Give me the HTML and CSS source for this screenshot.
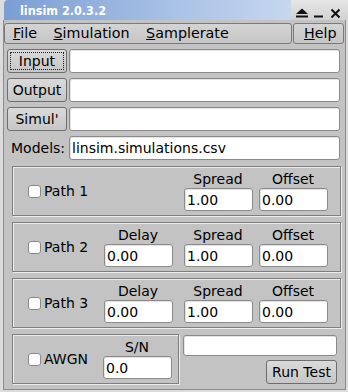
FILE: index.html
```html
<!DOCTYPE html>
<html>
<head>
<title>linsim 2.0.3.2</title>
<link rel="stylesheet" href="styles.css">
</head>
<body>

<div class="window">

    <div class="titlebar">
        <div class="title">linsim 2.0.3.2</div>
        <div class="wm-buttons">
            <svg width="57" height="20" viewBox="0 0 57 20">
                <polygon points="5,14 11,8.5 17,14" fill="#111"/>
                <rect x="5" y="15.5" width="12" height="2" fill="#111"/>
                <rect x="23" y="15.5" width="9" height="2" fill="#111"/>
                <path d="M40.5 9.5 L48.5 17.5 M48.5 9.5 L40.5 17.5" stroke="#111" stroke-width="2"/>
            </svg>
        </div>
    </div>

    <div class="client">

        <div class="menubar">
            <div class="menu-main">
                <span class="menu-item"><u>F</u>ile</span>
                <span class="menu-item"><u>S</u>imulation</span>
                <span class="menu-item"><u>S</u>amplerate</span>
            </div>
            <div class="menu-help">
                <span class="menu-item"><u>H</u>elp</span>
            </div>
        </div>

        <div class="file-row">
            <button class="btn file-btn focused">Input</button>
            <input class="entry file-entry" type="text" value="">
        </div>
        <div class="file-row">
            <button class="btn file-btn">Output</button>
            <input class="entry file-entry" type="text" value="">
        </div>
        <div class="file-row">
            <button class="btn file-btn">Simul'</button>
            <input class="entry file-entry" type="text" value="">
        </div>
        <div class="file-row">
            <label class="models-label">Models:</label>
            <input class="entry file-entry" type="text" value="linsim.simulations.csv">
        </div>

        <div class="group path">
            <div class="check-cell"><span class="checkbox"></span>Path 1</div>
            <div class="field"></div>
            <div class="field">
                <div class="field-label">Spread</div>
                <input class="entry num" type="text" value="1.00">
            </div>
            <div class="field">
                <div class="field-label">Offset</div>
                <input class="entry num" type="text" value="0.00">
            </div>
        </div>

        <div class="group path">
            <div class="check-cell"><span class="checkbox"></span>Path 2</div>
            <div class="field">
                <div class="field-label">Delay</div>
                <input class="entry num" type="text" value="0.00">
            </div>
            <div class="field">
                <div class="field-label">Spread</div>
                <input class="entry num" type="text" value="1.00">
            </div>
            <div class="field">
                <div class="field-label">Offset</div>
                <input class="entry num" type="text" value="0.00">
            </div>
        </div>

        <div class="group path">
            <div class="check-cell"><span class="checkbox"></span>Path 3</div>
            <div class="field">
                <div class="field-label">Delay</div>
                <input class="entry num" type="text" value="0.00">
            </div>
            <div class="field">
                <div class="field-label">Spread</div>
                <input class="entry num" type="text" value="1.00">
            </div>
            <div class="field">
                <div class="field-label">Offset</div>
                <input class="entry num" type="text" value="0.00">
            </div>
        </div>

        <div class="bottom-row">
            <div class="group awgn">
                <div class="check-cell"><span class="checkbox"></span>AWGN</div>
                <div class="field">
                    <div class="field-label">S/N</div>
                    <input class="entry num" type="text" value="0.0">
                </div>
            </div>
            <div class="run-box">
                <input class="entry status-entry" type="text" value="">
                <button class="btn run-btn">Run Test</button>
            </div>
        </div>

    </div>
</div>

</body>
</html>
```

FILE: styles.css
```css
* {
    box-sizing: border-box;
}

body {
    margin: 0;
    font-family: "DejaVu Sans", sans-serif;
    font-size: 14px;
    color: #000;
}

.window {
    width: 348px;
    height: 392px;
    background: #dcdcdc;
    display: flex;
    flex-direction: column;
    overflow: hidden;
}

/* window manager title */

.titlebar {
    height: 20px;
    display: flex;
    flex-shrink: 0;
}

.title {
    flex: 1;
    margin-left: 4px;
    padding-left: 16px;
    border-radius: 4px 0 0 0;
    background: linear-gradient(to right, #7b9ed3, #a9c2e6 60%, #c7d7ee);
    color: #fff;
    font-family: "DejaVu Sans", sans-serif;
    font-stretch: condensed;
    font-weight: bold;
    font-size: 12.5px;
    line-height: 21px;
}

.wm-buttons {
    width: 57px;
    background: linear-gradient(to bottom, #e6e6e6, #d2d2d2);
}

.wm-buttons svg {
    display: block;
}

/* client area */

.client {
    flex: 1;
    margin: 0 2px 2px 3px;
    padding-top: 3px;
    background: #c3c3c3;
    border: 1px solid #8c8c8c;
    border-top: none;
}

.menubar {
    display: flex;
    gap: 1px;
    height: 21px;
    margin-right: 1px;
}

.menu-main,
.menu-help {
    display: flex;
    align-items: center;
    border: 1px solid #7a7a7a;
    border-radius: 3px;
    background: linear-gradient(to bottom, #d4d4d4, #c6c6c6);
}

.menu-main {
    flex: 1;
}

.menu-help {
    width: 51px;
    padding-left: 2px;
}

.menu-item {
    padding: 0 8.5px 0 8px;
    font-size: 14.3px;
    line-height: 19px;
}

/* file rows */

.file-row {
    display: flex;
    gap: 2px;
    height: 24px;
    margin: 5px 5px 0 3px;
}

.btn {
    font-family: "DejaVu Sans", sans-serif;
    font-size: 14px;
    color: #000;
    padding: 0;
    border: 1px solid #6e6e6e;
    border-radius: 3px;
    background: linear-gradient(to bottom, #dadada, #c6c6c6);
}

.file-btn {
    width: 60px;
    height: 24px;
}

.focused {
    outline: 1px dotted #222;
    outline-offset: -4px;
}

.entry {
    font-family: "DejaVu Sans", sans-serif;
    font-size: 14px;
    color: #000;
    background: #fff;
    border: 1px solid #8a8a8a;
    border-radius: 3px;
    padding: 0 0 0 2px;
    margin: 0;
    box-shadow: inset 1px 1px 0 #e4e4e4;
}

.file-entry {
    flex: 1;
    height: 24px;
}

.models-label {
    width: 60px;
    padding-left: 4px;
    line-height: 24px;
}

/* path groups */

.group {
    display: grid;
    height: 50px;
    margin: 6px 4px 0 8px;
    padding: 4px 0;
    border: 1px solid #7e7e7e;
    box-shadow: inset 1px 1px 0 #ececec, 1px 1px 0 #ececec;
    grid-template-rows: 17px 23px;
}

.path {
    grid-template-columns: 91px 80px 75px 68px;
}

.path:first-of-type {
    margin-top: 5px;
}

.check-cell {
    grid-row: 1 / 3;
    display: flex;
    align-items: center;
    gap: 3px;
    padding-left: 15px;
}

.checkbox {
    width: 13px;
    height: 13px;
    background: #fff;
    border: 1px solid #8a8a8a;
    border-radius: 3px;
}

.field {
    grid-row: 1 / 3;
    display: grid;
    grid-template-rows: 17px 23px;
}

.field-label {
    width: 68px;
    text-align: center;
    line-height: 17px;
}

.num {
    width: 69px;
    height: 23px;
}

/* bottom */

.bottom-row {
    display: flex;
    margin-top: 6px;
}

.awgn {
    width: 167px;
    margin: 0;
    margin-left: 8px;
    grid-template-columns: 90px 69px;
}

.run-box {
    display: flex;
    flex-direction: column;
    align-items: flex-end;
    gap: 4px;
    width: 154px;
    margin-left: 4px;
    padding-top: 1px;
}

.status-entry {
    width: 154px;
    height: 21px;
}

.run-btn {
    width: 71px;
    height: 24px;
}
```
